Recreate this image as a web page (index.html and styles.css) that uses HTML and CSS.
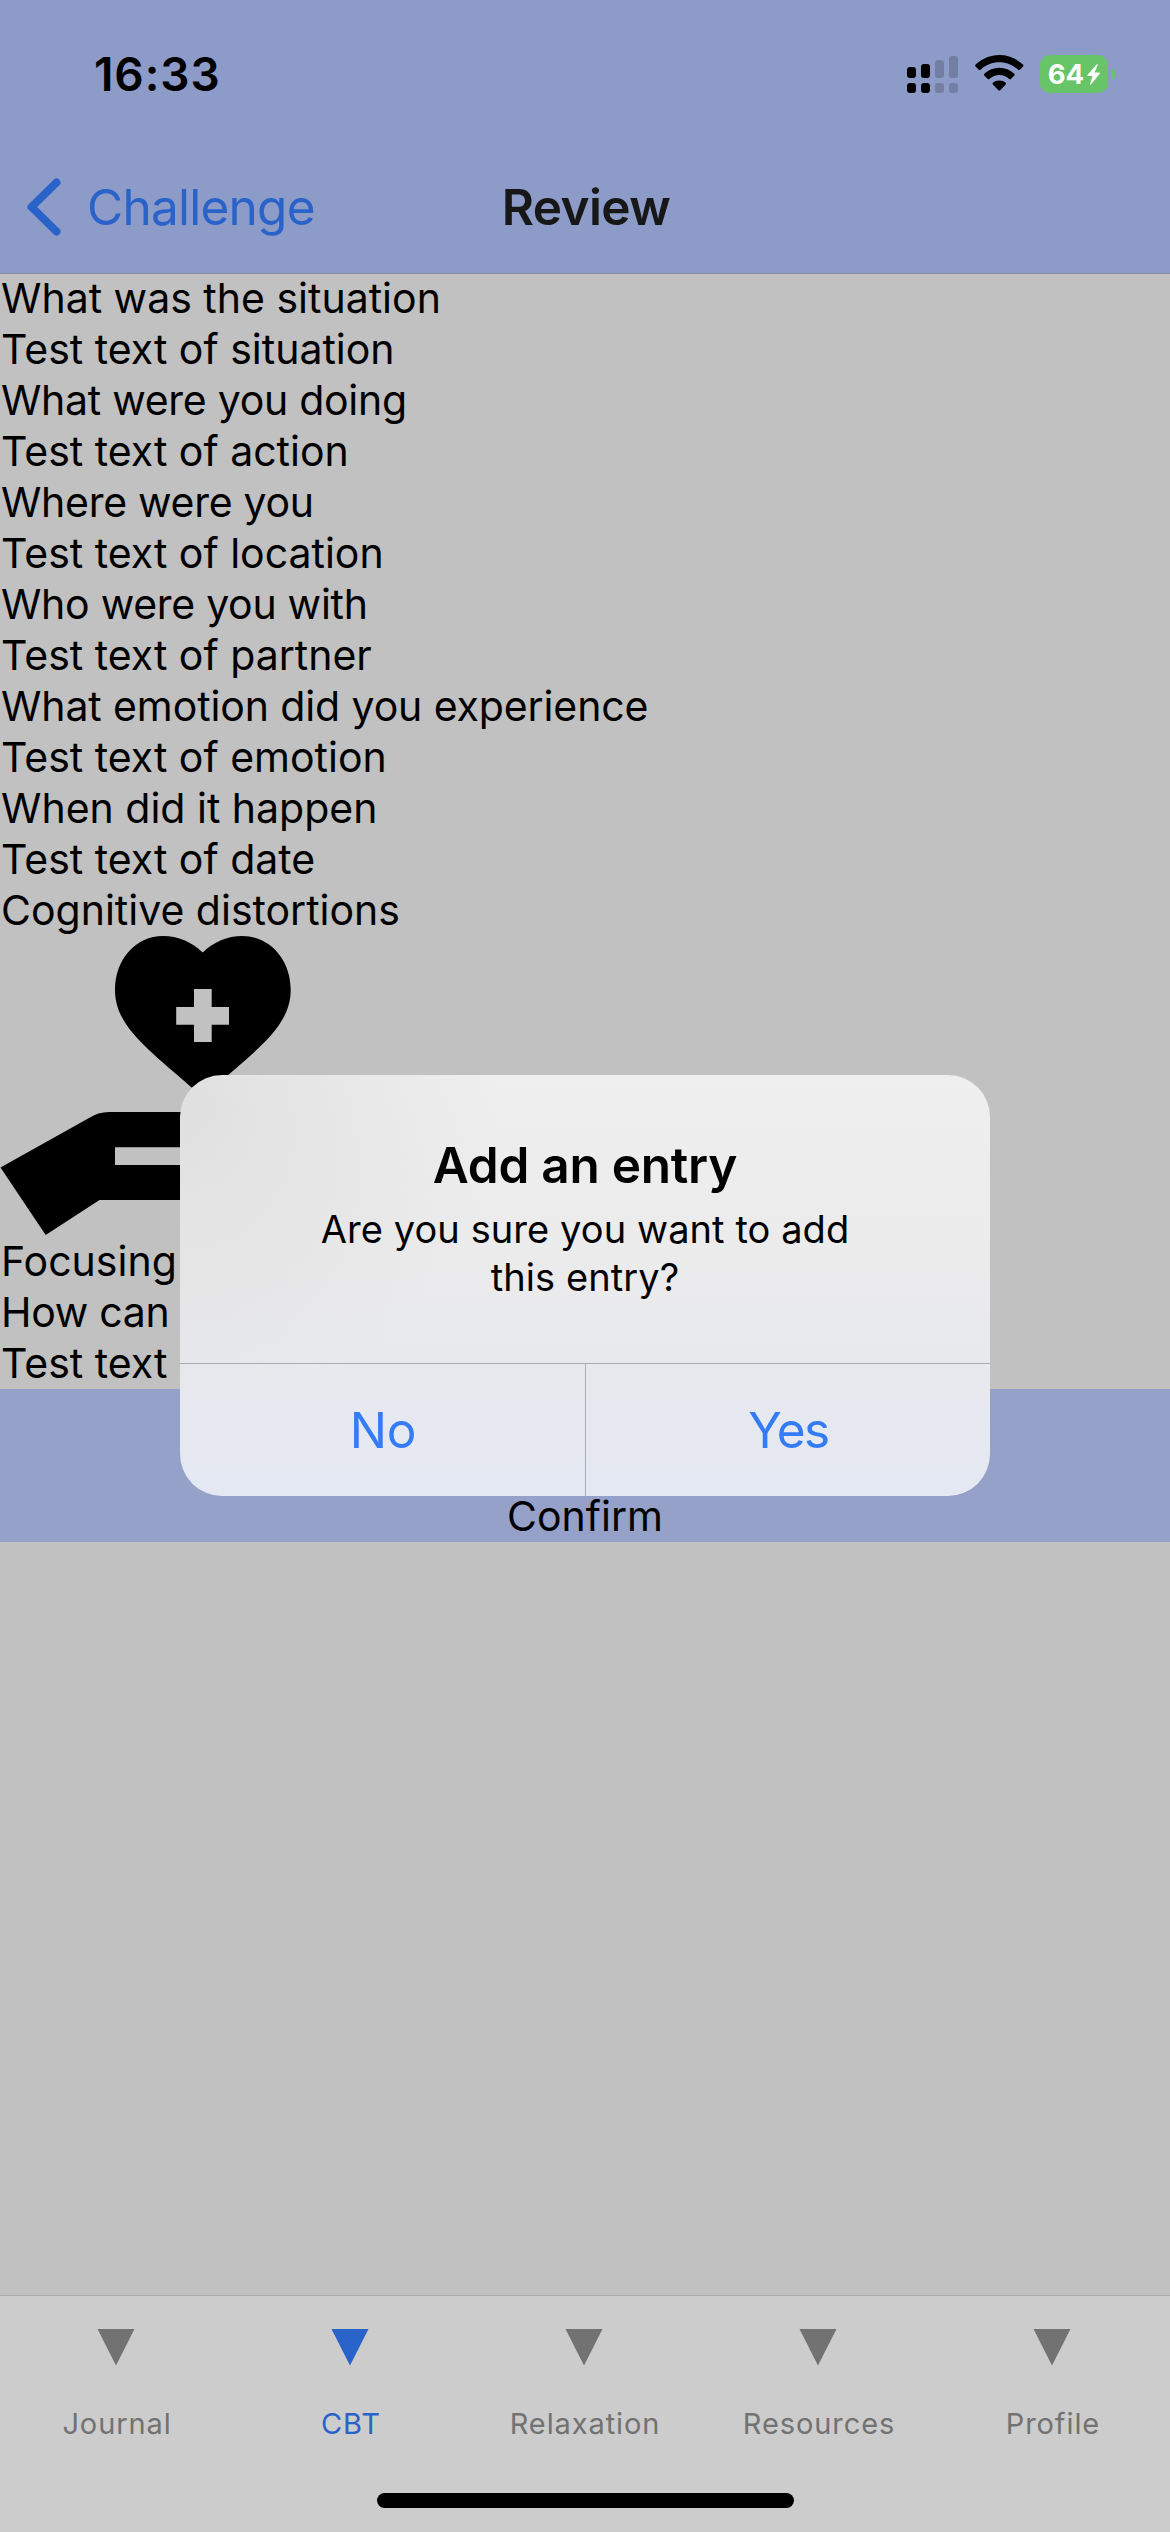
FILE: index.html
```html
<!DOCTYPE html>
<html lang="en">
<head>
<meta charset="utf-8">
<title>Review</title>
<link rel="stylesheet" href="styles.css">
</head>
<body>
<div class="screen">
  <header class="header">
    <div class="status">
      <div class="clock">16:33</div>
      <div class="indicators">
        <svg class="signal" width="51" height="38" viewBox="0 0 51 38">
          <rect x="0" y="12" width="9" height="11" rx="3"/>
          <rect x="14" y="9" width="9" height="14" rx="3"/>
          <rect x="0" y="28" width="9" height="10" rx="3"/>
          <rect x="14" y="28" width="9" height="10" rx="3"/>
          <g class="dim">
            <rect x="28" y="5" width="9" height="18" rx="3"/>
            <rect x="42" y="1" width="9" height="22" rx="3"/>
            <rect x="28" y="28" width="9" height="10" rx="3"/>
            <rect x="42" y="28" width="9" height="10" rx="3"/>
          </g>
        </svg>
        <svg class="wifi" width="49" height="36" viewBox="0 0 49 36">
          <path d="M24.3 0C33.300 0 41.600 3.500 48 9.600Q48.900 10.500 48 11.400L44.800 14.700Q44 15.500 43.100 14.700C38 9.900 31.400 7.300 24.300 7.300S10.600 9.900 5.500 14.700Q4.600 15.500 3.800 14.700L.6 11.400Q-.3 10.500.6 9.600C7 3.500 15.300 0 24.300 0Z"/>
          <path d="M24.300 12.700C29.900 12.700 35.200 14.900 39.300 18.700Q40.200 19.600 39.300 20.500L35.900 23.900Q35 24.700 34.200 24C31.400 21.500 28 20.100 24.300 20.100S17.200 21.500 14.400 24Q13.600 24.700 12.700 23.900L9.300 20.500Q8.400 19.600 9.300 18.700C13.400 14.900 18.700 12.700 24.300 12.700Z"/>
          <path d="M24.300 25.500C26.800 25.500 29 26.300 30.700 27.700Q31.600 28.600 30.700 29.500L25.200 35.200Q24.300 36 23.400 35.200L17.900 29.500Q17 28.600 17.900 27.700C19.600 26.300 21.800 25.500 24.300 25.500Z"/>
        </svg>
        <div class="battery">
          <div class="charge">
            <span>64</span>
            <svg width="13" height="21" viewBox="0 0 13 21"><path d="M9.800.2 .4 11Q-.2 11.900.8 12H5.600L3 20Q3 21.200 4 20.600L12.700 9.700Q13.200 8.700 12.300 8.600H7.700L10.600 1Q10.700-.3 9.800.2Z"/></svg>
          </div>
          <svg class="nub" width="5" height="12" viewBox="0 0 5 12"><path d="M0 0Q4.500 2 4.500 6T0 12Z"/></svg>
        </div>
      </div>
    </div>
    <nav class="navbar">
      <div class="back">
        <svg width="35" height="58" viewBox="0 0 35 58"><path d="M29.500 4.500 4.500 29 29.500 53.500"/></svg>
        <span>Challenge</span>
      </div>
      <h1 class="title">Review</h1>
    </nav>
  </header>

  <main class="content">
    <p>What was the situation</p>
    <p>Test text of situation</p>
    <p class="tight">What were you doing</p>
    <p>Test text of action</p>
    <p class="tight">Where were you</p>
    <p>Test text of location</p>
    <p class="tight">Who were you with</p>
    <p>Test text of partner</p>
    <p class="snug">What emotion did you experience</p>
    <p>Test text of emotion</p>
    <p>When did it happen</p>
    <p>Test text of date</p>
    <p>Cognitive distortions</p>
    <svg class="care" width="300" height="300" viewBox="0 0 300 300">
      <path fill-rule="evenodd" d="M202.700 16.500C192 6 178 0 163 0C136 0 115 23 115 54C115 90 148 113 190.700 150.700L202.700 161.500L214.700 150.700C257.400 113 290.700 90 290.700 54C290.700 23 269.400 0 242.400 0C227.400 0 213.400 6 202.700 16.500ZM194 53H211.700V71H229V88.700H211.700V106H194V88.700H176.200V71H194Z"/>
      <path fill-rule="evenodd" d="M.5 231.500 89 182Q98 176 109 176H230V264H99.500L45.700 299ZM115 211.300V229H230V211.300Z"/>
    </svg>
    <p>Focusing</p>
    <p class="tight">How can y</p>
    <p>Test text</p>
    <div class="confirm">Confirm</div>
  </main>

  <footer class="tabbar">
    <div class="tabs">
      <div class="tab"><svg width="38" height="37" viewBox="0 0 38 37"><path d="M.5 0h37L19 36.500z"/></svg><span>Journal</span></div>
      <div class="tab active"><svg width="38" height="37" viewBox="0 0 38 37"><path d="M.5 0h37L19 36.500z"/></svg><span>CBT</span></div>
      <div class="tab"><svg width="38" height="37" viewBox="0 0 38 37"><path d="M.5 0h37L19 36.500z"/></svg><span>Relaxation</span></div>
      <div class="tab"><svg width="38" height="37" viewBox="0 0 38 37"><path d="M.5 0h37L19 36.500z"/></svg><span>Resources</span></div>
      <div class="tab"><svg width="38" height="37" viewBox="0 0 38 37"><path d="M.5 0h37L19 36.500z"/></svg><span>Profile</span></div>
    </div>
    <div class="home"></div>
  </footer>

  <div class="alert" role="alertdialog">
    <div class="message">
      <h2>Add an entry</h2>
      <p>Are you sure you want to add<br>this entry?</p>
    </div>
    <div class="actions">
      <button>No</button>
      <button class="yes">Yes</button>
    </div>
  </div>
</div>
</body>
</html>
```
FILE: styles.css
```css
* { box-sizing: border-box; }

body {
  margin: 0;
  background: #c1c1c1;
  color: #000;
  font-family: Inter, "Liberation Sans", sans-serif;
}

h1, h2, p { margin: 0; }
svg { display: block; flex: none; }

.screen {
  position: relative;
  display: flex;
  flex-direction: column;
  width: 1170px;
  height: 2532px;
  overflow: hidden;
}

/* Header */
.header {
  height: 274px;
  margin-bottom: -1px;
  background: #8c9bc8;
  border-bottom: 1px solid #858a99;
}

.status {
  display: flex;
  justify-content: space-between;
  align-items: flex-start;
  height: 141px;
  padding: 43px 54px 0 94px;
}

.clock {
  font-size: 46px;
  font-weight: 600;
  line-height: 62px;
  letter-spacing: 0.9px;
}

.indicators {
  display: flex;
  align-items: flex-start;
  padding-top: 12px;
}

.signal .dim { fill: #727ea3; }
.wifi { margin-left: 17px; }

.battery {
  display: flex;
  align-items: center;
  gap: 3px;
  margin-left: 16px;
}

.charge {
  display: flex;
  align-items: center;
  justify-content: center;
  gap: 3px;
  width: 68px;
  height: 38px;
  border-radius: 10px;
  background: #67c467;
  color: #fff;
  font-size: 27.5px;
  font-weight: 700;
  line-height: 38px;
}

.charge svg { fill: #fff; }
.nub { fill: #67c467; }

.navbar {
  display: grid;
  grid-template-columns: 1fr auto 1fr;
  align-items: center;
  height: 132px;
}

.back {
  display: flex;
  align-items: center;
  gap: 25px;
  padding-left: 27px;
  color: #2962c9;
  font-size: 49.5px;
  letter-spacing: -0.75px;
}

.back path {
  fill: none;
  stroke: #2962c9;
  stroke-width: 8;
  stroke-linecap: round;
  stroke-linejoin: round;
}

.title {
  padding-left: 2px;
  color: #171717;
  font-size: 49.5px;
  font-weight: 600;
  letter-spacing: -0.6px;
}

/* Scrolling page content */
.content {
  flex: 1;
  font-size: 41px;
  line-height: 51px;
}

.content p { padding-left: 1px; }
.content .tight { letter-spacing: -0.28px; }
.content .snug { letter-spacing: -0.11px; }

.confirm {
  display: flex;
  align-items: flex-end;
  justify-content: center;
  height: 153px;
  background: #95a1c8;
}

/* Tab bar */
.tabbar {
  height: 237px;
  background: #ccc;
  border-top: 1px solid #adadad;
}

.tabs {
  display: grid;
  grid-template-columns: repeat(5, 1fr);
  height: 197px;
}

.tab {
  display: flex;
  flex-direction: column;
  align-items: center;
  gap: 38px;
  padding: 33px 2px 0 0;
  color: #727272;
  fill: #727272;
  font-size: 29px;
  line-height: 40px;
  letter-spacing: 0.9px;
}

.tab span { padding-left: 2px; }

.active {
  color: #2962c9;
  fill: #2962c9;
}

.home {
  width: 417px;
  height: 15px;
  margin: 0 auto;
  border-radius: 8px;
  background: #000;
}

/* Confirmation dialog */
.alert {
  position: absolute;
  top: 1075px;
  left: 180px;
  width: 810px;
  height: 421px;
  overflow: hidden;
  border-radius: 42px;
  background:
    radial-gradient(ellipse 320px 300px at 0 30px, rgba(218, 218, 218, 0.7), rgba(225, 225, 225, 0)),
    linear-gradient(#efefef, #ebebec 45%, #e8e9ed 69%, #e4e8f3);
}

.message {
  height: 288px;
  padding-top: 60px;
  text-align: center;
}

.message h2 {
  font-size: 49.5px;
  font-weight: 600;
  line-height: 60px;
  letter-spacing: -0.25px;
}

.message p {
  padding-top: 10px;
  font-size: 38px;
  line-height: 48px;
  letter-spacing: 0.08px;
}

.actions {
  display: grid;
  grid-template-columns: 406px 1fr;
  height: 133px;
  border-top: 1px solid #a9abb3;
}

.actions button {
  padding: 0 0 0 1px;
  border: 0;
  background: none;
  color: #347bf7;
  font-family: inherit;
  font-size: 49.5px;
  letter-spacing: -0.3px;
}

.actions button:first-child { border-right: 1px solid #a9adbb; }
.actions .yes { letter-spacing: -1.5px; }
```
